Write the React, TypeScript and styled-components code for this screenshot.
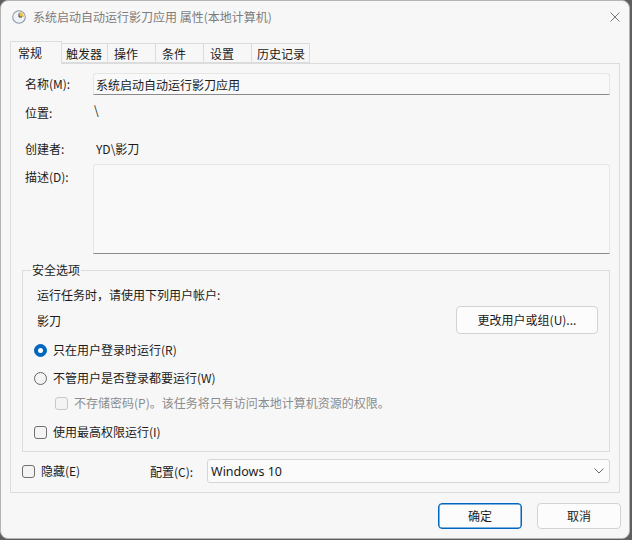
import React from "react";
import styled, { createGlobalStyle } from "styled-components";

const Global = createGlobalStyle`
  html, body { margin: 0; padding: 0; }
  body {
    background: #5d5f63;
    font-family: "Noto Sans CJK SC", "Noto Sans", sans-serif;
    font-size: 12px;
    color: #1b1b1b;
  }
  * { box-sizing: border-box; }
`;

const Window = styled.div`
  width: 630px;
  height: 539px;
  background: #f7f7f7;
  border: 1px solid #b4b4b4;
  border-radius: 8px;
  display: flex;
  flex-direction: column;
  overflow: hidden;
`;

const TitleBar = styled.div`
  height: 31px;
  display: flex;
  align-items: center;
  padding: 0 9px 0 11px;
  gap: 7px;
`;

const Title = styled.div`
  flex: 1;
  color: #7c7c7c;
  line-height: 16px;
`;

const Body = styled.div`
  padding: 9px 9px 0 9px;
  display: flex;
  flex-direction: column;
`;

const TabStrip = styled.div`
  height: 22px;
  display: flex;
  align-items: flex-end;
`;

const Tab = styled.div<{ $w: number; $pl: number; $active?: boolean }>`
  width: ${(p) => p.$w + 1}px;
  height: ${(p) => (p.$active ? 23 : 20)}px;
  margin-bottom: ${(p) => (p.$active ? -1 : 0)}px;
  margin-left: -1px;
  &:first-child { margin-left: 0; }
  padding-left: ${(p) => p.$pl}px;
  padding-top: ${(p) => (p.$active ? 2 : 1)}px;
  line-height: 17px;
  border: 1px solid #dcdcdc;
  border-bottom: ${(p) => (p.$active ? "none" : "1px solid #dcdcdc")};
  background: #f7f7f7;
  position: relative;
  z-index: ${(p) => (p.$active ? 2 : 1)};
  white-space: nowrap;
`;

const Panel = styled.div`
  border: 1px solid #dcdcdc;
  padding: 9px 9px 9px 11px;
  display: flex;
  flex-direction: column;
  background: #f7f7f7;
`;

const FieldRow = styled.div<{ $mt: number; $h?: number; $align?: string }>`
  display: grid;
  grid-template-columns: 71px 1fr;
  margin-top: ${(p) => p.$mt}px;
  ${(p) => (p.$h ? `height: ${p.$h}px;` : "")}
  align-items: ${(p) => p.$align || "center"};
`;

const FieldLabel = styled.div<{ $pt?: number }>`
  padding-left: 3px;
  padding-top: ${(p) => p.$pt || 0}px;
  line-height: 18px;
  white-space: nowrap;
`;

const Value = styled.div<{ $lh?: number; $pl?: number }>`
  line-height: ${(p) => p.$lh || 18}px;
  padding-left: ${(p) => p.$pl || 0}px;
  white-space: nowrap;
`;

const TextBox = styled.div<{ $h: number }>`
  height: ${(p) => p.$h}px;
  background: #f9f9f9;
  border: 1px solid #e6e6e6;
  border-bottom: 1px solid #8a8a8a;
  border-radius: 3px 3px 1px 1px;
  padding: 2px 2px 0 2px;
  line-height: 17px;
  white-space: nowrap;
`;

const Group = styled.fieldset`
  margin: 7px 0 0 0;
  padding: 7px 11px 10px 11px;
  border: 1px solid #dcdcdc;
  border-radius: 0;
  display: flex;
  flex-direction: column;
  min-width: 0;
`;

const Legend = styled.legend`
  padding: 0 1px;
  margin-left: -3px;
  line-height: 18px;
`;

const Line = styled.div<{ $mt?: number; $pl?: number; $h?: number }>`
  margin-top: ${(p) => p.$mt || 0}px;
  padding-left: ${(p) => p.$pl || 0}px;
  height: ${(p) => p.$h || 18}px;
  line-height: 18px;
  display: flex;
  align-items: center;
  white-space: nowrap;
`;

const UserRow = styled.div`
  margin-top: 2px;
  height: 28px;
  display: flex;
  align-items: center;
  justify-content: space-between;
  padding-left: 3px;
`;

const Button = styled.div<{ $w: number; $h: number; $primary?: boolean }>`
  width: ${(p) => p.$w}px;
  height: ${(p) => p.$h}px;
  border: 1px solid ${(p) => (p.$primary ? "#0067c0" : "#d3d3d3")};
  border-radius: 4px;
  background: #fcfcfc;
  display: flex;
  align-items: center;
  justify-content: center;
  line-height: 16px;
  white-space: nowrap;
  ${(p) => (p.$primary ? "box-shadow: inset 0 0 0 0.5px #0067c0;" : "")}
`;

const Choice = styled.div<{ $mt: number; $pl?: number; $disabled?: boolean }>`
  margin-top: ${(p) => p.$mt}px;
  padding-left: ${(p) => p.$pl || 0}px;
  height: 18px;
  display: flex;
  align-items: center;
  gap: 6px;
  line-height: 18px;
  white-space: nowrap;
  color: ${(p) => (p.$disabled ? "#8c8c8c" : "#1b1b1b")};
`;

const Radio = styled.span<{ $checked?: boolean }>`
  width: 13px;
  height: 13px;
  border-radius: 50%;
  flex: none;
  background: ${(p) => (p.$checked ? "#0067c0" : "#f4f4f4")};
  border: 1px solid ${(p) => (p.$checked ? "#0067c0" : "#666")};
  display: flex;
  align-items: center;
  justify-content: center;
  &::after {
    content: "";
    width: 5px;
    height: 5px;
    border-radius: 50%;
    background: #fff;
    display: ${(p) => (p.$checked ? "block" : "none")};
  }
`;

const Check = styled.span<{ $disabled?: boolean }>`
  width: 13px;
  height: 13px;
  border-radius: 3px;
  flex: none;
  background: #f4f4f4;
  border: 1px solid ${(p) => (p.$disabled ? "#c8c8c8" : "#707070")};
`;

const BottomRow = styled.div`
  margin-top: 7px;
  height: 24px;
  display: grid;
  grid-template-columns: 128px 57px 1fr;
  align-items: center;
`;

const Select = styled.div`
  height: 24px;
  border: 1px solid #d6d6d6;
  border-radius: 3px;
  background: #fbfbfb;
  display: flex;
  align-items: center;
  justify-content: space-between;
  padding: 0 5px 0 3px;
  font-family: "Noto Sans", "Noto Sans CJK SC", sans-serif;
  font-size: 12.5px;
`;

const Footer = styled.div`
  margin-top: 10px;
  display: flex;
  justify-content: flex-end;
  gap: 15px;
  margin-right: -1px;
`;

const ClockIcon = () => (
  <svg width="14" height="14" viewBox="0 0 14 14">
    <circle cx="7" cy="7" r="6.3" fill="#eef2f6" stroke="#8c9aa8" strokeWidth="1.1" />
    <path d="M7 2 A5 5 0 0 1 12 7 L7 7 Z" fill="#f1c24a" />
    <path d="M7 3.5 V7 H10" fill="none" stroke="#3b4650" strokeWidth="1" />
  </svg>
);

const CloseIcon = () => (
  <svg width="10" height="10" viewBox="0 0 10 10">
    <path d="M0.5 0.5 L9.5 9.5 M9.5 0.5 L0.5 9.5" stroke="#7a7a7a" strokeWidth="1" />
  </svg>
);

const Chevron = () => (
  <svg width="10" height="6" viewBox="0 0 10 6">
    <path d="M0.5 0.5 L5 5 L9.5 0.5" fill="none" stroke="#6a6a6a" strokeWidth="1" />
  </svg>
);

const tabs = [
  { label: "常规", w: 51, pl: 7, active: true },
  { label: "触发器", w: 46, pl: 4 },
  { label: "操作", w: 48, pl: 6 },
  { label: "条件", w: 48, pl: 6 },
  { label: "设置", w: 48, pl: 6 },
  { label: "历史记录", w: 58, pl: 5 },
];

export default function App() {
  return (
    <>
      <Global />
      <Window>
        <TitleBar>
          <ClockIcon />
          <Title>系统启动自动运行影刀应用 属性(本地计算机)</Title>
          <CloseIcon />
        </TitleBar>
        <Body>
          <TabStrip>
            {tabs.map((t) => (
              <Tab key={t.label} $w={t.w} $pl={t.pl} $active={t.active}>
                {t.label}
              </Tab>
            ))}
          </TabStrip>
          <Panel>
            <FieldRow $mt={0} $h={22}>
              <FieldLabel>名称(M):</FieldLabel>
              <TextBox $h={22}>系统启动自动运行影刀应用</TextBox>
            </FieldRow>
            <FieldRow $mt={9} $h={18} $align="start">
              <FieldLabel>位置:</FieldLabel>
              <Value $lh={12} $pl={1}>\</Value>
            </FieldRow>
            <FieldRow $mt={18} $h={18}>
              <FieldLabel>创建者:</FieldLabel>
              <Value $pl={3}>YD\影刀</Value>
            </FieldRow>
            <FieldRow $mt={6} $align="start">
              <FieldLabel $pt={4}>描述(D):</FieldLabel>
              <TextBox $h={90} />
            </FieldRow>
            <Group>
              <Legend>安全选项</Legend>
              <Line $pl={3}>运行任务时，请使用下列用户帐户:</Line>
              <UserRow>
                <span>影刀</span>
                <Button $w={142} $h={28}>更改用户或组(U)...</Button>
              </UserRow>
              <Choice $mt={7}>
                <Radio $checked />
                只在用户登录时运行(R)
              </Choice>
              <Choice $mt={10}>
                <Radio />
                不管用户是否登录都要运行(W)
              </Choice>
              <Choice $mt={7} $pl={21} $disabled>
                <Check $disabled />
                不存储密码(P)。该任务将只有访问本地计算机资源的权限。
              </Choice>
              <Choice $mt={11}>
                <Check />
                使用最高权限运行(I)
              </Choice>
            </Group>
            <BottomRow>
              <Choice $mt={0}>
                <Check />
                隐藏(E)
              </Choice>
              <span>配置(C):</span>
              <Select>
                <span>Windows 10</span>
                <Chevron />
              </Select>
            </BottomRow>
          </Panel>
          <Footer>
            <Button $w={84} $h={26} $primary>确定</Button>
            <Button $w={84} $h={26}>取消</Button>
          </Footer>
        </Body>
      </Window>
    </>
  );
}
